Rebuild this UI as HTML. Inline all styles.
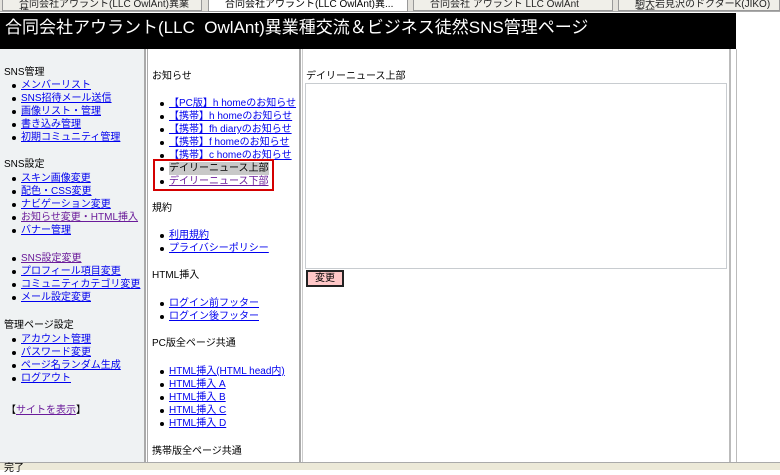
<!DOCTYPE html>
<html><head><meta charset="utf-8"><style>
*{margin:0;padding:0;box-sizing:border-box}
body{width:780px;height:470px;overflow:hidden;background:#fff;font-family:"Liberation Sans","Noto Sans CJK JP",sans-serif;font-size:10px;color:#000;position:relative}
.a{position:absolute;white-space:nowrap;line-height:13px}
a{color:#0000ee;text-decoration:underline}
a.v{color:#6a1b9a}
.b{position:absolute;white-space:nowrap;line-height:13px}
.b:before{content:"";position:absolute;left:-9px;top:5px;width:4px;height:4px;background:#000;border-radius:50%}
</style></head><body>
<div style="position:absolute;left:0;top:0;width:780px;height:12px;background:#e4e2dc;border-bottom:1px solid #aaa"></div>
<div style="position:absolute;left:2px;top:0;width:200px;height:11px;background:#f0efe9;border:1px solid #999;border-top:0;font-size:10px;line-height:9px;padding-left:16px;color:#222;overflow:hidden">合同会社アウラント(LLC OwlAnt)異業種...</div>
<div style="position:absolute;left:208px;top:0;width:200px;height:12px;background:#fff;border:1px solid #999;border-top:0;font-size:10px;line-height:9px;padding-left:16px;overflow:hidden">合同会社アウラント(LLC OwlAnt)異...</div>
<div style="position:absolute;left:413px;top:0;width:200px;height:11px;background:#f0efe9;border:1px solid #999;border-top:0;font-size:10px;line-height:9px;padding-left:16px;overflow:hidden;color:#222">合同会社 アウラント LLC OwlAnt</div>
<div style="position:absolute;left:618px;top:0;width:162px;height:11px;background:#f0efe9;border:1px solid #999;border-top:0;font-size:10px;line-height:9px;padding-left:16px;overflow:hidden;color:#222">駒大岩見沢のドクターK(JIKO)高校</div>
<div style="position:absolute;left:0;top:13px;width:736px;height:36px;background:#000;color:#fff;font-size:17px;line-height:30px;padding-left:5px">合同会社アウラント(LLC&nbsp; OwlAnt)異業種交流＆ビジネス徒然SNS管理ページ</div>
<div style="position:absolute;left:0;top:49px;width:144px;height:413px;background:#eff2f3"></div>
<div style="position:absolute;left:144px;top:49px;width:4px;height:413px;border-left:2px solid #aaa;border-right:1px solid #aaa"></div>
<div style="position:absolute;left:299px;top:49px;width:4px;height:413px;border-left:2px solid #aaa;border-right:1px solid #ccc"></div>
<div style="position:absolute;left:729px;top:49px;width:8px;height:413px;border-left:2px solid #bbb;border-right:1px solid #bbb"></div>
<div style="position:absolute;left:0;top:462px;width:780px;height:8px;background:#ece9d8;border-top:1px solid #aaa;font-size:10px;line-height:12px;padding-left:4px">完了</div>

<div class="a" style="left:4px;top:66px">SNS管理</div>
<div class="b" style="left:21px;top:79px"><a href="#">メンバーリスト</a></div>
<div class="b" style="left:21px;top:92px"><a href="#">SNS招待メール送信</a></div>
<div class="b" style="left:21px;top:105px"><a href="#">画像リスト・管理</a></div>
<div class="b" style="left:21px;top:118px"><a href="#">書き込み管理</a></div>
<div class="b" style="left:21px;top:131px"><a href="#">初期コミュニティ管理</a></div>
<div class="a" style="left:4px;top:158px">SNS設定</div>
<div class="b" style="left:21px;top:172px"><a href="#">スキン画像変更</a></div>
<div class="b" style="left:21px;top:185px"><a href="#">配色・CSS変更</a></div>
<div class="b" style="left:21px;top:198px"><a href="#">ナビゲーション変更</a></div>
<div class="b" style="left:21px;top:211px"><a class="v" href="#">お知らせ変更・HTML挿入</a></div>
<div class="b" style="left:21px;top:224px"><a href="#">バナー管理</a></div>
<div class="b" style="left:21px;top:252px"><a class="v" href="#">SNS設定変更</a></div>
<div class="b" style="left:21px;top:265px"><a href="#">プロフィール項目変更</a></div>
<div class="b" style="left:21px;top:278px"><a href="#">コミュニティカテゴリ変更</a></div>
<div class="b" style="left:21px;top:291px"><a href="#">メール設定変更</a></div>
<div class="a" style="left:4px;top:319px">管理ページ設定</div>
<div class="b" style="left:21px;top:333px"><a href="#">アカウント管理</a></div>
<div class="b" style="left:21px;top:346px"><a href="#">パスワード変更</a></div>
<div class="b" style="left:21px;top:359px"><a href="#">ページ名ランダム生成</a></div>
<div class="b" style="left:21px;top:372px"><a href="#">ログアウト</a></div>
<div class="a" style="left:6px;top:404px">【<a class="v" href="#">サイトを表示</a>】</div>

<div class="a" style="left:152px;top:70px">お知らせ</div>
<div class="b" style="left:169px;top:97px"><a href="#">【PC版】h homeのお知らせ</a></div>
<div class="b" style="left:169px;top:110px"><a href="#">【携帯】h homeのお知らせ</a></div>
<div class="b" style="left:169px;top:123px"><a href="#">【携帯】fh diaryのお知らせ</a></div>
<div class="b" style="left:169px;top:136px"><a href="#">【携帯】f homeのお知らせ</a></div>
<div class="b" style="left:169px;top:149px"><a href="#">【携帯】c homeのお知らせ</a></div>
<div class="b" style="left:169px;top:162px;background:#c8c8c8">デイリーニュース上部</div>
<div class="b" style="left:169px;top:175px"><a class="v" href="#">デイリーニュース下部</a></div>
<div style="position:absolute;left:153px;top:159px;width:121px;height:32px;border:2px solid #d40000"></div>
<div class="a" style="left:152px;top:202px">規約</div>
<div class="b" style="left:169px;top:229px"><a href="#">利用規約</a></div>
<div class="b" style="left:169px;top:242px"><a href="#">プライバシーポリシー</a></div>
<div class="a" style="left:152px;top:269px">HTML挿入</div>
<div class="b" style="left:169px;top:297px"><a href="#">ログイン前フッター</a></div>
<div class="b" style="left:169px;top:310px"><a href="#">ログイン後フッター</a></div>
<div class="a" style="left:152px;top:337px">PC版全ページ共通</div>
<div class="b" style="left:169px;top:365px"><a href="#">HTML挿入(HTML head内)</a></div>
<div class="b" style="left:169px;top:378px"><a href="#">HTML挿入 A</a></div>
<div class="b" style="left:169px;top:391px"><a href="#">HTML挿入 B</a></div>
<div class="b" style="left:169px;top:404px"><a href="#">HTML挿入 C</a></div>
<div class="b" style="left:169px;top:417px"><a href="#">HTML挿入 D</a></div>
<div class="a" style="left:152px;top:445px">携帯版全ページ共通</div>

<div class="a" style="left:306px;top:70px">デイリーニュース上部</div>
<div style="position:absolute;left:305px;top:83px;width:422px;height:186px;border:1px solid #c8ccd0;background:#fff"></div>
<div style="position:absolute;left:306px;top:270px;width:38px;height:17px;background:#ffc8c8;border:2px solid #222;font-size:10px;line-height:13px;text-align:center">変更</div>
</body></html>
